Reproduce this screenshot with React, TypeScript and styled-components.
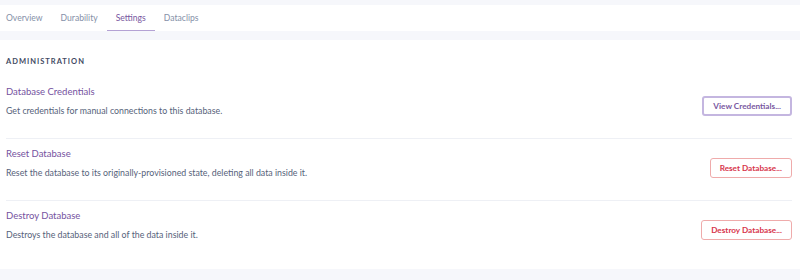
import React from "react";
import styled, { createGlobalStyle } from "styled-components";

const GlobalStyle = createGlobalStyle`
	body {
		margin: 0;
		background: #f6f7fb;
		font-family: Lato, "Open Sans", sans-serif;
		-webkit-font-smoothing: antialiased;
	}
`;

type Tone = "purple" | "red";

type Setting = {
	title: string;
	body: string;
	action: string;
	tone: Tone;
};

const settings: Setting[] = [
	{
		title: "Database Credentials",
		body: "Get credentials for manual connections to this database.",
		action: "View Credentials...",
		tone: "purple",
	},
	{
		title: "Reset Database",
		body: "Reset the database to its originally-provisioned state, deleting all data inside it.",
		action: "Reset Database...",
		tone: "red",
	},
	{
		title: "Destroy Database",
		body: "Destroys the database and all of the data inside it.",
		action: "Destroy Database...",
		tone: "red",
	},
];

const tabs = ["Overview", "Durability", "Settings", "Dataclips"];

const Page = styled.div`
	padding: 5px 0 11px;
	display: flex;
	flex-direction: column;
	gap: 9px;
`;

const TabBar = styled.nav`
	background: #fff;
	height: 26px;
	display: flex;
	align-items: stretch;
`;

const Tab = styled.div<{ active?: boolean }>`
	display: flex;
	align-items: center;
	padding: 0 9px;
	font-size: 8.6px;
	color: ${(props) => (props.active ? "#79589f" : "#8590a8")};
	border-bottom: 1px solid
		${(props) => (props.active ? "#b4a2d4" : "transparent")};
	box-sizing: border-box;
	&:first-child {
		padding-left: 6px;
	}
`;

const Panel = styled.section`
	background: #fff;
	padding: 16px 8px 7px 6px;
`;

const Heading = styled.h2`
	margin: 0 0 9px;
	font-size: 7.5px;
	font-weight: 700;
	letter-spacing: 1px;
	color: #3f4a63;
	text-transform: uppercase;
	line-height: 12px;
`;

const Row = styled.div`
	display: flex;
	align-items: center;
	justify-content: space-between;
	padding: 8px 0 21px;
	border-bottom: 1px solid #eef0f5;
	&:last-child {
		border-bottom: none;
	}
`;

const RowText = styled.div`
	display: flex;
	flex-direction: column;
	gap: 6px;
`;

const Title = styled.div`
	font-size: 9.5px;
	color: #7552a0;
	line-height: 13px;
`;

const Description = styled.div`
	font-size: 8.8px;
	color: #56627a;
	line-height: 13px;
`;

const ActionButton = styled.button<{ tone: Tone }>`
	margin-top: 9px;
	height: 20px;
	padding: 0 9px;
	border-radius: 3px;
	background: #fff;
	font-family: inherit;
	font-size: 8.2px;
	font-weight: 700;
	border: ${(props) =>
		props.tone === "purple" ? "2px solid #c4b6e0" : "1px solid #efabab"};
	color: ${(props) => (props.tone === "purple" ? "#79589f" : "#d7354b")};
	cursor: pointer;
`;

const App = (): JSX.Element => (
	<>
		<GlobalStyle />
		<Page>
			<TabBar>
				{tabs.map((tab) => (
					<Tab key={tab} active={tab === "Settings"}>
						{tab}
					</Tab>
				))}
			</TabBar>
			<Panel>
				<Heading>Administration</Heading>
				{settings.map((setting) => (
					<Row key={setting.title}>
						<RowText>
							<Title>{setting.title}</Title>
							<Description>{setting.body}</Description>
						</RowText>
						<ActionButton tone={setting.tone}>{setting.action}</ActionButton>
					</Row>
				))}
			</Panel>
		</Page>
	</>
);

export default App;
